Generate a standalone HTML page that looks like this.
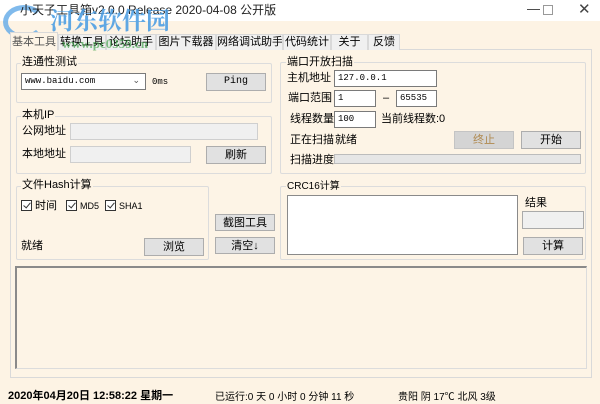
<!DOCTYPE html>
<html><head><meta charset="utf-8"><style>
*{margin:0;padding:0;box-sizing:border-box}
body{width:600px;height:403px;background:#fdf3e4;position:relative;overflow:hidden;font-family:"Liberation Sans","Noto Sans CJK SC",sans-serif;font-size:11px;line-height:13px;color:#000}
.a{position:absolute;white-space:nowrap}
.title{left:0;top:0;width:600px;height:21px;background:#fff}
.tab{position:absolute;top:34px;height:16px;background:#f0f0f0;border:1px solid #d9d9d9;border-bottom:none;font-size:11px;line-height:14px;text-align:center;white-space:nowrap;overflow:hidden}
.panel{left:10px;top:49px;width:582px;height:329px;border:1px solid #d9d9d9;background:#fdf4e6}
.grp{position:absolute;border:1px solid #dcdcdc;border-radius:2px}
.lg{position:absolute;background:#fdf4e6;padding:0 1px;font-size:11px;line-height:13px;white-space:nowrap}
.in{position:absolute;background:#fff;border:1px solid #7a7a7a;font-family:"Liberation Mono",monospace;font-size:9px;line-height:15px;padding-left:3px;white-space:nowrap}
.dis{background:#f0f0f0;border:1px solid #cfcfcf}
.btn{position:absolute;background:#e1e1e1;border:1px solid #adadad;text-align:center;font-size:11px;line-height:16px;white-space:nowrap}
.cb{display:inline-block;width:11px;height:11px;border:1px solid #333;background:#fff;vertical-align:-2px;margin-right:3px;position:relative}
.cb:after{content:"";position:absolute;left:3px;top:0;width:3px;height:6px;border:solid #333;border-width:0 1.5px 1.5px 0;transform:rotate(40deg)}
</style></head><body>
<div class="a title"></div>
<div class="a" style="left:3px;top:5px;width:42px;height:34px;border-radius:50%;border:5px solid #61aae8;border-right-color:transparent;opacity:.8"></div>
<div class="a" style="left:20px;top:4px;font-size:12px;color:#222">小天子工具箱v2.0.0 Release 2020-04-08 公开版</div>
<div class="a" style="left:50px;top:5px;color:#4f9fe3;font-size:24px;line-height:28px;font-weight:bold;font-family:'Noto Serif CJK SC',serif;opacity:.9">河东软件园</div>
<div class="a" style="left:527px;top:2px;font-size:13px;color:#333">—</div>
<div class="a" style="left:543px;top:5px;width:10px;height:10px;border:1px solid #999"></div>
<div class="a" style="left:578px;top:2px;font-size:15px;line-height:16px;color:#444">✕</div>

<div class="a panel"></div>
<div class="tab" style="left:10px;top:32px;width:48px;height:19px;background:#fdf4e6;line-height:18px;color:#555">基本工具</div>
<div class="tab" style="left:58px;width:48px">转换工具</div>
<div class="tab" style="left:106px;width:50px">论坛助手</div>
<div class="tab" style="left:156px;width:60px">图片下载器</div>
<div class="tab" style="left:216px;width:67px">网络调试助手</div>
<div class="tab" style="left:283px;width:48px">代码统计</div>
<div class="tab" style="left:331px;width:37px">关于</div>
<div class="tab" style="left:368px;width:32px">反馈</div>
<div class="a" style="left:62px;top:37px;color:#2e9a3a;font-size:13px;font-weight:bold;opacity:.6;font-family:'Liberation Serif',serif">www.pc0359.cn</div>

<div class="grp" style="left:16px;top:63px;width:256px;height:40px"></div>
<div class="lg" style="left:21px;top:56px">连通性测试</div>
<div class="in" style="left:21px;top:73px;width:125px;height:17px">www.baidu.com<span style="position:absolute;right:5px;top:0;color:#555">⌄</span></div>
<div class="a" style="left:152px;top:76px;font-family:'Liberation Mono',monospace;font-size:9px">0ms</div>
<div class="btn" style="left:206px;top:73px;width:60px;height:18px;font-family:'Liberation Mono',monospace;font-size:10px">Ping</div>

<div class="grp" style="left:16px;top:116px;width:256px;height:58px"></div>
<div class="lg" style="left:21px;top:109px">本机IP</div>
<div class="a" style="left:22px;top:125px">公网地址</div>
<div class="in dis" style="left:70px;top:123px;width:188px;height:17px"></div>
<div class="a" style="left:22px;top:148px">本地地址</div>
<div class="in dis" style="left:70px;top:146px;width:121px;height:17px"></div>
<div class="btn" style="left:206px;top:146px;width:60px;height:18px">刷新</div>

<div class="grp" style="left:16px;top:186px;width:193px;height:74px"></div>
<div class="lg" style="left:21px;top:179px">文件Hash计算</div>
<div class="a" style="left:21px;top:200px"><span class="cb"></span>时间</div>
<div class="a" style="left:66px;top:200px;font-size:9px"><span class="cb"></span>MD5</div>
<div class="a" style="left:105px;top:200px;font-size:9px"><span class="cb"></span>SHA1</div>
<div class="a" style="left:21px;top:240px">就绪</div>
<div class="btn" style="left:144px;top:238px;width:60px;height:18px">浏览</div>
<div class="btn" style="left:215px;top:214px;width:60px;height:17px">截图工具</div>
<div class="btn" style="left:215px;top:237px;width:60px;height:17px">清空↓</div>

<div class="grp" style="left:280px;top:62px;width:306px;height:112px"></div>
<div class="lg" style="left:286px;top:56px">端口开放扫描</div>
<div class="a" style="left:287px;top:72px">主机地址</div>
<div class="in" style="left:334px;top:70px;width:103px;height:17px">127.0.0.1</div>
<div class="a" style="left:288px;top:92px">端口范围</div>
<div class="in" style="left:334px;top:90px;width:42px;height:17px">1</div>
<div class="a" style="left:383px;top:92px">–</div>
<div class="in" style="left:396px;top:90px;width:41px;height:17px">65535</div>
<div class="a" style="left:290px;top:113px">线程数量</div>
<div class="in" style="left:334px;top:111px;width:42px;height:17px">100</div>
<div class="a" style="left:381px;top:113px">当前线程数:0</div>
<div class="a" style="left:290px;top:134px">正在扫描</div>
<div class="a" style="left:335px;top:134px">就绪</div>
<div class="btn" style="left:454px;top:131px;width:60px;height:18px;background:#d4d4d4;color:#b08a50;border-color:#c4c4c4">终止</div>
<div class="btn" style="left:521px;top:131px;width:60px;height:18px">开始</div>
<div class="a" style="left:290px;top:154px">扫描进度</div>
<div class="a" style="left:334px;top:154px;width:247px;height:10px;background:#e6e6e6;border:1px solid #bcbcbc"></div>

<div class="grp" style="left:280px;top:186px;width:306px;height:74px"></div>
<div class="lg" style="left:286px;top:180px;font-size:10px">CRC16计算</div>
<div class="a" style="left:287px;top:195px;width:231px;height:60px;background:#fff;border:1px solid #8a8a8a"></div>
<div class="a" style="left:525px;top:197px">结果</div>
<div class="in dis" style="left:522px;top:211px;width:62px;height:18px;border-color:#aaa"></div>
<div class="btn" style="left:523px;top:237px;width:60px;height:18px">计算</div>

<div class="a" style="left:15px;top:266px;width:572px;height:103px;border:1px solid #dcdcdc;border-top:2px solid #8a8a8a;border-left:2px solid #8a8a8a;background:#fdf4e6"></div>

<div class="a" style="left:8px;top:390px;font-size:11px;font-weight:bold">2020年04月20日 12:58:22 星期一</div>
<div class="a" style="left:215px;top:391px;font-size:10px">已运行:0 天 0 小时 0 分钟 11 秒</div>
<div class="a" style="left:398px;top:391px;font-size:10px">贵阳 阴 17℃ 北风 3级</div>
</body></html>
